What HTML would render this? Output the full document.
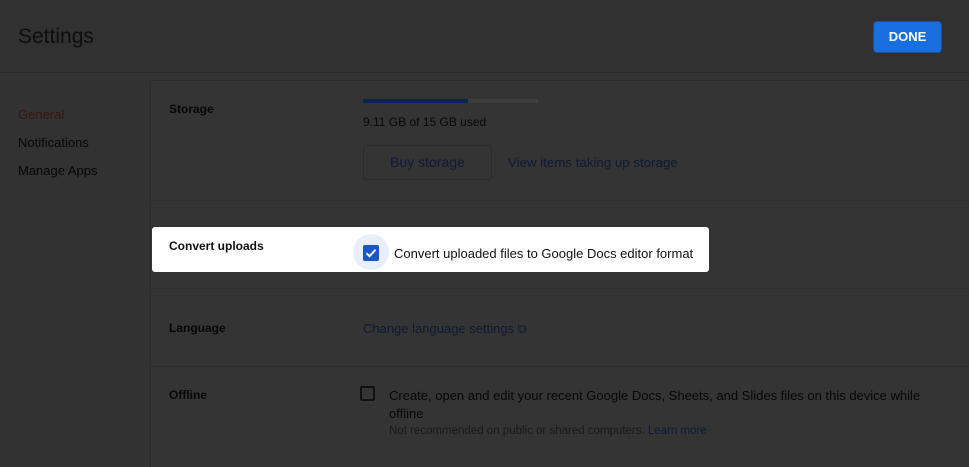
<!DOCTYPE html>
<html><head><style>
*{margin:0;padding:0;box-sizing:border-box}
body{width:969px;height:467px;background:#323232;font-family:"Liberation Sans",sans-serif;position:relative;overflow:hidden;color:#050505}
.hdr{position:absolute;left:0;top:0;width:969px;height:73px;background:#313131;border-bottom:1px solid #2a2a2a}
.t{position:absolute;font-size:13px;color:#070707;white-space:nowrap}
.panel{position:absolute;left:150px;top:80px;width:819px;height:387px;background:#343434;border-left:1px solid #2c2c2c;border-top:1px solid #2c2c2c}
.lnk{color:#0e1a36}
.sep{position:absolute;left:151px;width:818px;height:1px;background:#2d2d2d}
</style></head><body>
<div class="hdr"></div>
<div class="t" style="left:18px;top:25px;font-size:21px;color:#0e0e0e">Settings</div>
<div style="position:absolute;left:873px;top:21px;width:69px;height:32px;background:#1a6fe0;border-radius:4px;border:1px solid #1d4f98;color:#fff;font-size:13px;font-weight:bold;text-align:center;line-height:30px">DONE</div>
<div class="panel"></div>
<div class="sep" style="top:200px"></div>
<div class="sep" style="top:288px"></div>
<div class="sep" style="top:366px"></div>
<div class="t" style="left:18px;top:107px;color:#3a1610">General</div>
<div class="t" style="left:18px;top:135px">Notifications</div>
<div class="t" style="left:18px;top:163px">Manage Apps</div>
<div class="t" style="left:169px;top:102px;font-weight:bold;font-size:12px">Storage</div>
<div style="position:absolute;left:363px;top:99px;width:175px;height:4px;background:#3e3e3e"></div>
<div style="position:absolute;left:363px;top:99px;width:105px;height:4px;background:#0c2450"></div>
<div class="t" style="left:363px;top:115px;font-size:12px">9.11 GB of 15 GB used</div>
<div style="position:absolute;left:363px;top:145px;width:129px;height:35px;border:1px solid #2b2b2b;border-radius:3px;color:#0e1a36;font-size:14px;text-align:center;line-height:33px">Buy storage</div>
<div class="t lnk" style="left:508px;top:155px;font-size:13.3px">View items taking up storage</div>
<div style="position:absolute;left:152px;top:227px;width:557px;height:45px;background:#fff;border-radius:3px"></div>
<div class="t" style="left:169px;top:239px;font-weight:bold;font-size:12px;color:#111">Convert uploads</div>
<div style="position:absolute;left:353px;top:234px;width:36px;height:36px;border-radius:50%;background:#e8effa"></div>
<div style="position:absolute;left:363px;top:245px;width:16px;height:16px;background:#1a56c4;border-radius:2px"><svg width="16" height="16"><path d="M3.5 8.2l3 3 6-6.5" stroke="#fff" stroke-width="2" fill="none"/></svg></div>
<div class="t" style="left:394px;top:246px;font-size:13px;color:#111">Convert uploaded files to Google Docs editor format</div>
<div class="t" style="left:169px;top:321px;font-weight:bold;font-size:12px">Language</div>
<div class="t lnk" style="left:363px;top:321px;font-size:13px">Change language settings ⧉</div>
<div class="t" style="left:169px;top:388px;font-weight:bold;font-size:12px">Offline</div>
<div style="position:absolute;left:360px;top:386px;width:15px;height:15px;border:2px solid #111;border-radius:2px"></div>
<div class="t" style="left:389px;top:388px;font-size:13px">Create, open and edit your recent Google Docs, Sheets, and Slides files on this device while</div>
<div class="t" style="left:389px;top:406px;font-size:13px">offline</div>
<div class="t" style="left:389px;top:425px;font-size:11.5px;color:#1a1a1a">Not recommended on public or shared computers. <span class="lnk">Learn more</span></div>
</body></html>
